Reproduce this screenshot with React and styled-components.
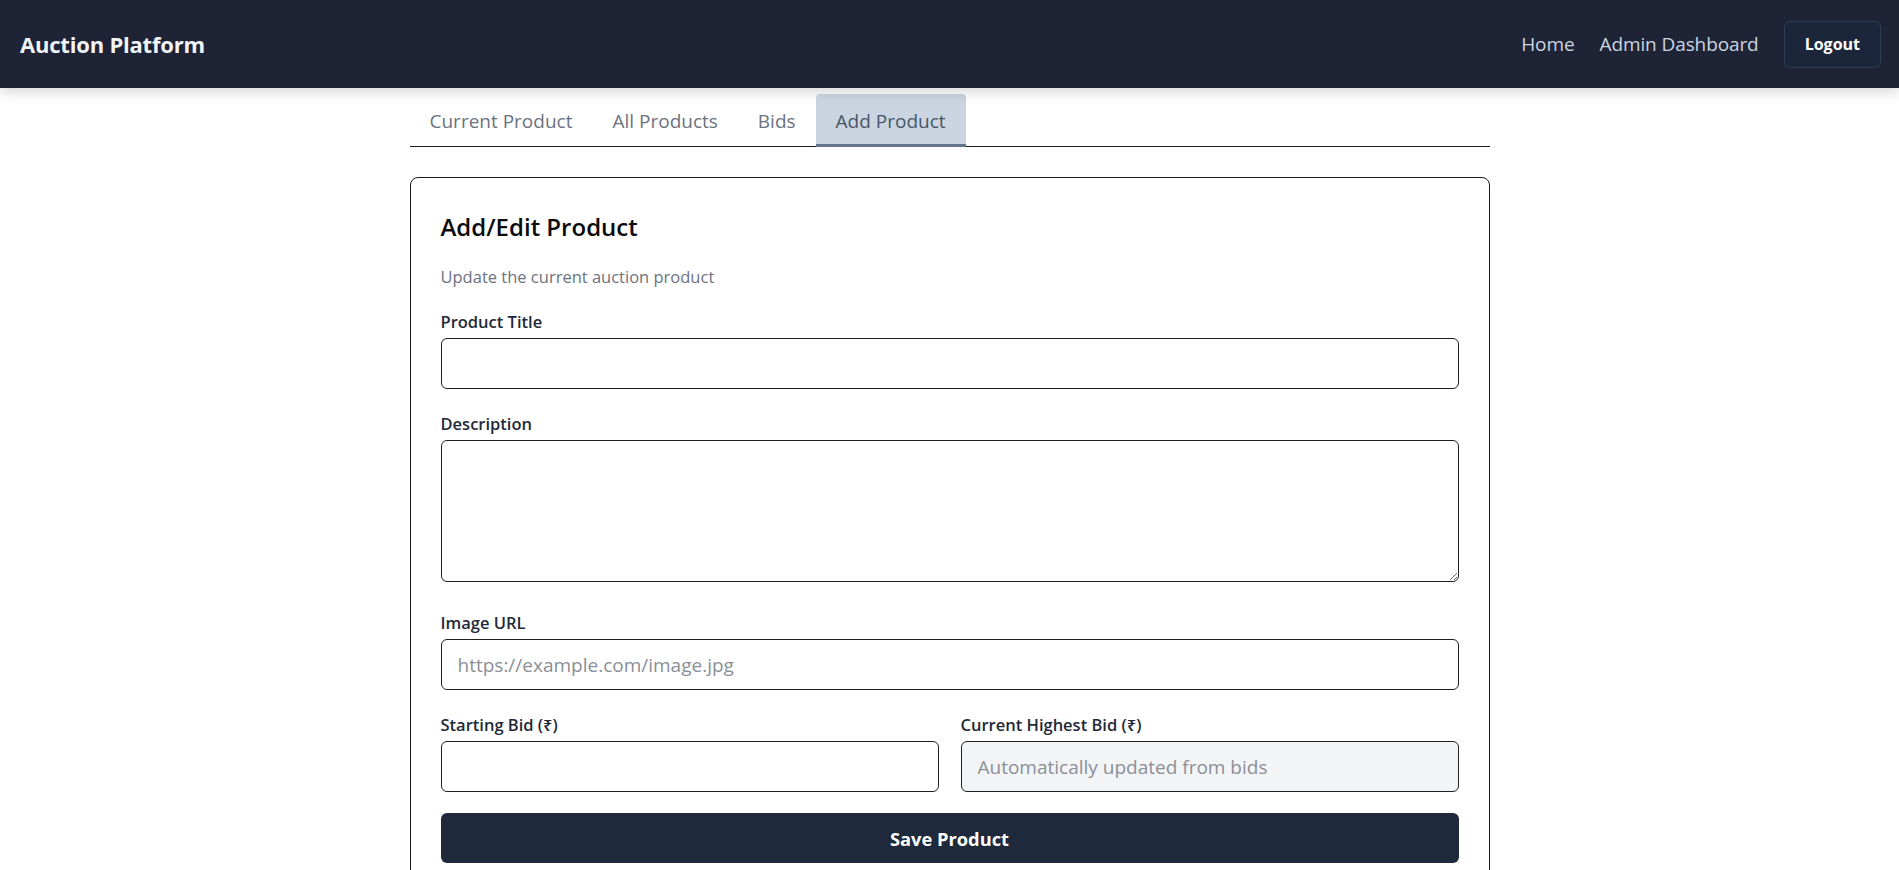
import React from "react";
import styled, { createGlobalStyle } from "styled-components";

const GlobalStyle = createGlobalStyle`
  * { box-sizing: border-box; }
  html, body { margin: 0; padding: 0; background: #ffffff; }
  body { font-family: "Open Sans", "Noto Sans", "Liberation Sans", sans-serif; color: #111827; }
`;

const Header = styled.header`
  height: 88px;
  background: #1e2335;
  display: flex;
  align-items: center;
  justify-content: space-between;
  padding: 0 18px 0 20px;
  box-shadow: 0 4px 12px rgba(0, 0, 0, 0.16);
  position: relative;
  z-index: 1;
`;

const Brand = styled.div`
  font-size: 22px;
  font-weight: 700;
  color: #f1f5f9;
  letter-spacing: -0.2px;
`;

const Nav = styled.nav`
  display: flex;
  align-items: center;
  gap: 25px;
`;

const NavLink = styled.a`
  font-size: 19px;
  color: #cbd5e1;
  text-decoration: none;
  letter-spacing: -0.1px;
`;

const LogoutButton = styled.button`
  height: 47px;
  padding: 0 20px;
  background: #1c263a;
  border: 1px solid #303c52;
  border-radius: 6px;
  color: #ffffff;
  font-family: inherit;
  font-size: 16px;
  font-weight: 700;
  margin-top: 0;
`;

const Main = styled.main`
  max-width: 1080px;
  margin: 6px auto 0;
`;

const TabBar = styled.div`
  display: flex;
  border-bottom: 1px solid #1f1f1f;
`;

const Tab = styled.div`
  height: 53px;
  padding: 4px 20px 0;
  display: flex;
  align-items: center;
  font-size: 19px;
  color: ${(p) => (p.$active ? "#475569" : "#6b7280")};
  background: ${(p) => (p.$active ? "#cbd5e1" : "transparent")};
  border-bottom: 3px solid ${(p) => (p.$active ? "#64748b" : "transparent")};
  border-radius: 4px 4px 0 0;
  margin-bottom: -1px;
`;

const Card = styled.section`
  margin-top: 30px;
  border: 1px solid #1a1a1a;
  border-radius: 8px;
  padding: 30px 30px 40px;
`;

const Title = styled.h2`
  margin: 0;
  font-size: 24px;
  line-height: 38px;
  font-weight: 600;
  color: #0b0b0b;
`;

const Subtitle = styled.p`
  margin: 20px 0 23px;
  font-size: 16.5px;
  line-height: 22px;
  color: #6b7280;
`;

const Field = styled.div`
  margin-bottom: ${(p) => (p.$last ? "0" : p.$tall ? "30px" : "24px")};
`;

const Label = styled.label`
  display: block;
  font-size: 16.5px;
  line-height: 22px;
  font-weight: 600;
  color: #1f2937;
  margin-bottom: 5px;
`;

const Input = styled.input`
  display: block;
  width: 100%;
  height: 51px;
  padding: 0 16px;
  border: 1px solid #1f1f1f;
  border-radius: 6px;
  font-family: inherit;
  font-size: 19px;
  color: #111827;
  background: ${(p) => (p.disabled ? "#f3f4f6" : "#ffffff")};
  outline: none;
  &::placeholder { color: #8a8f98; }
`;

const TextArea = styled.textarea`
  display: block;
  width: 100%;
  height: 142px;
  padding: 12px 16px;
  border: 1px solid #1f1f1f;
  border-radius: 6px;
  font-family: inherit;
  font-size: 19px;
  resize: vertical;
  outline: none;
`;

const Row = styled.div`
  display: grid;
  grid-template-columns: 1fr 1fr;
  gap: 22px;
  margin-bottom: 21px;
`;

const SaveButton = styled.button`
  display: block;
  width: 100%;
  height: 50px;
  border: none;
  border-radius: 6px;
  background: #1e293b;
  color: #ffffff;
  font-family: inherit;
  font-size: 18.3px;
  font-weight: 700;
`;

export default function App() {
  return (
    <>
      <GlobalStyle />
      <Header>
        <Brand>Auction Platform</Brand>
        <Nav>
          <NavLink href="#">Home</NavLink>
          <NavLink href="#">Admin Dashboard</NavLink>
          <LogoutButton>Logout</LogoutButton>
        </Nav>
      </Header>
      <Main>
        <TabBar>
          <Tab>Current Product</Tab>
          <Tab>All Products</Tab>
          <Tab>Bids</Tab>
          <Tab $active>Add Product</Tab>
        </TabBar>
        <Card>
          <Title>Add/Edit Product</Title>
          <Subtitle>Update the current auction product</Subtitle>
          <Field>
            <Label>Product Title</Label>
            <Input type="text" />
          </Field>
          <Field $tall>
            <Label>Description</Label>
            <TextArea />
          </Field>
          <Field>
            <Label>Image URL</Label>
            <Input type="text" placeholder="https://example.com/image.jpg" />
          </Field>
          <Row>
            <Field $last>
              <Label>Starting Bid (₹)</Label>
              <Input type="number" />
            </Field>
            <Field $last>
              <Label>Current Highest Bid (₹)</Label>
              <Input type="text" disabled placeholder="Automatically updated from bids" />
            </Field>
          </Row>
          <SaveButton>Save Product</SaveButton>
        </Card>
      </Main>
    </>
  );
}
